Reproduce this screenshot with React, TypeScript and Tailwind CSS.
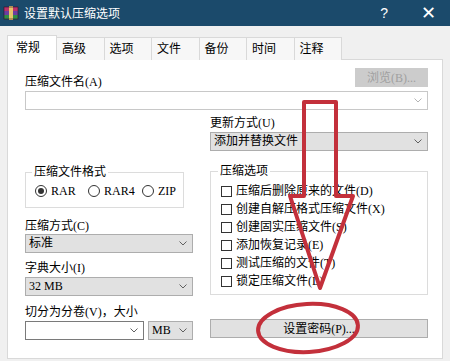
import React from 'react'

const tabs = ['高级', '选项', '文件', '备份', '时间', '注释']

const options = [
  '压缩后删除原来的文件(D)',
  '创建自解压格式压缩文件(X)',
  '创建固实压缩文件(S)',
  '添加恢复记录(E)',
  '测试压缩的文件(T)',
  '锁定压缩文件(L)',
]

const Chevron = ({ light }: { light?: boolean }) => (
  <svg width="8" height="5" viewBox="0 0 8 5" className={light ? 'text-[#b4b4b4]' : 'text-[#606060]'}>
    <path d="M0.5 0.5 L4 4 L7.5 0.5" fill="none" stroke="currentColor" strokeWidth="1" />
  </svg>
)

const Select = ({ value, className = '' }: { value: string; className?: string }) => (
  <div
    className={`flex h-[19px] items-center justify-between border border-[#adadad] bg-[#e1e1e1] pl-[3px] pr-[5px] leading-[17px] ${className}`}
  >
    <span>{value}</span>
    <Chevron />
  </div>
)

const Radio = ({ label, checked, className = '' }: { label: string; checked?: boolean; className?: string }) => (
  <div className={`flex h-[18px] items-center gap-[4px] ${className}`}>
    <span className="flex h-[12px] w-[12px] items-center justify-center rounded-full border border-[#333] bg-white">
      {checked && <span className="h-[6px] w-[6px] rounded-full bg-[#333]" />}
    </span>
    <span>{label}</span>
  </div>
)

const RarIcon = () => (
  <svg width="16" height="16" viewBox="0 0 16 16">
    <rect x="1" y="2" width="14" height="4" fill="#b8336a" />
    <rect x="1" y="6" width="14" height="4" fill="#6b3fa0" />
    <rect x="1" y="10" width="14" height="4" fill="#2f8f46" />
    <rect x="6" y="1" width="4" height="14" fill="#e6c46a" />
    <rect x="1" y="2" width="14" height="12" fill="none" stroke="#3a1020" strokeWidth="0.6" />
  </svg>
)

export default function App() {
  return (
    <div className="relative h-[361px] w-[450px] overflow-hidden bg-[#f0f0f0] text-[12px] text-black font-[family-name:'Liberation_Serif','Noto_Sans_CJK_SC',serif]">
      {/* title bar */}
      <div className="flex h-[26px] items-center bg-[#1b4a6b] pl-[3px] text-white">
        <RarIcon />
        <span className="ml-[5px] text-[12px] font-[family-name:'Noto_Sans_CJK_SC',sans-serif]">设置默认压缩选项</span>
        <span className="ml-auto mr-[33px] text-[14px] font-[family-name:'Liberation_Sans',sans-serif]">?</span>
        <span className="mr-[14px] text-[18px] leading-none font-[family-name:'Liberation_Sans',sans-serif]">✕</span>
      </div>

      <div className="px-[7px] pt-[9px]">
        {/* tabs */}
        <div className="flex h-[25px] items-end">
          <div className="relative z-10 h-[25px] w-[50px] border border-b-0 border-[#d9d9d9] bg-white pl-[8px] leading-[24px]">
            常规
          </div>
          {tabs.map((t, i) => (
            <div
              key={t}
              className={`h-[23px] w-[47.5px] border-t border-r border-[#d9d9d9] bg-[#f7f7f7] pl-[5px] leading-[22px] ${i === tabs.length - 1 ? '' : ''}`}
            >
              {t}
            </div>
          ))}
        </div>

        {/* panel */}
        <div className="-mt-px h-[300px] border border-[#d9d9d9] bg-white pl-[17px] pr-[14px] pt-[8px]">
          <div className="flex h-[19px] items-end justify-between">
            <span className="translate-y-[2px] leading-[14px]">压缩文件名(A)</span>
            <div className="flex h-[19px] w-[73px] items-center justify-center bg-[#cccccc] text-[#a0a0a0]">浏览(B)...</div>
          </div>
          <div className="mt-[4px] flex h-[19px] items-center justify-end border border-[#c8c8c8] bg-white pr-[5px]">
            <Chevron light />
          </div>

          <div className="mt-[6px] flex gap-[17px]">
            {/* left column */}
            <div className="flex w-[168px] flex-col">
              <fieldset className="mt-[49px] w-[159px] border border-[#dcdcdc] px-0 pb-[7px]">
                <legend className="ml-[6px] px-[2px] leading-[14px]">压缩文件格式</legend>
                <div className="flex pl-[9px] pt-[3px]">
                  <Radio label="RAR" checked className="w-[53px]" />
                  <Radio label="RAR4" className="w-[54px]" />
                  <Radio label="ZIP" />
                </div>
              </fieldset>
              <span className="mt-[11px] leading-[14px]">压缩方式(C)</span>
              <Select value="标准" className="mt-[1px]" />
              <span className="mt-[8px] leading-[14px]">字典大小(I)</span>
              <Select value="32 MB" className="mt-[2px]" />
              <span className="mt-[9px] leading-[14px]">切分为分卷(V)，大小</span>
              <div className="mt-[2px] flex gap-[4px]">
                <div className="flex h-[19px] w-[119px] items-center justify-end border border-[#7a7a7a] bg-white pr-[5px]">
                  <Chevron />
                </div>
                <Select value="MB" className="flex-1" />
              </div>
            </div>

            {/* right column */}
            <div className="flex flex-1 flex-col">
              <span className="leading-[14px]">更新方式(U)</span>
              <Select value="添加并替换文件" className="mt-[2px]" />
              <fieldset className="mt-[13px] border border-[#dcdcdc] px-0 pb-[4px]">
                <legend className="ml-[7px] px-[2px] leading-[14px]">压缩选项</legend>
                <div className="flex flex-col pl-[10px] pt-[4px]">
                  {options.map((o) => (
                    <div key={o} className="flex h-[18px] items-center gap-[4px]">
                      <span className="h-[11px] w-[11px] border border-[#333] bg-white" />
                      <span>{o}</span>
                    </div>
                  ))}
                </div>
              </fieldset>
              <div className="mt-[24px] flex h-[19px] items-center justify-center border border-[#adadad] bg-[#e1e1e1]">
                设置密码(P)...
              </div>
            </div>
          </div>
        </div>
      </div>

      {/* red annotation drawn over the dialog */}
      <svg className="pointer-events-none absolute left-0 top-0" width="450" height="361" viewBox="0 0 450 361">
        <path
          d="M304 102 L336 102 L336 196 L353 196 L320 288 L290 196 L304 196 Z"
          fill="none"
          stroke="#c3303b"
          strokeWidth="4"
          strokeLinejoin="round"
        />
        <ellipse cx="308" cy="328" rx="50" ry="24" fill="none" stroke="#c3303b" strokeWidth="4" transform="rotate(-3 308 328)" />
      </svg>
    </div>
  )
}
